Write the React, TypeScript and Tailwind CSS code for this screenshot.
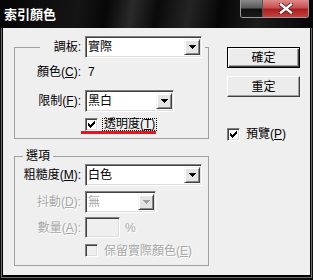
import clsx from 'clsx';

const sunken =
  'border border-t-[#808080] border-l-[#808080] border-r-white border-b-white shadow-[inset_1px_1px_0_#404040,inset_-1px_-1px_0_#dcdcdc]';

function CheckMark({ disabled }: { disabled?: boolean }) {
  const rows: [number, number, number][] = [
    [6, 0, 1],
    [5, 1, 2],
    [0, 2, 1],
    [4, 2, 3],
    [0, 3, 2],
    [3, 3, 3],
    [0, 4, 5],
    [1, 5, 3],
    [2, 6, 1],
  ];
  return (
    <svg width="7" height="7" viewBox="0 0 7 7" shapeRendering="crispEdges">
      {rows.map(([x, y, w], i) => (
        <rect key={i} x={x} y={y} width={w} height="1" fill={disabled ? '#a0a0a0' : '#000'} />
      ))}
    </svg>
  );
}

function Check({ checked, disabled }: { checked?: boolean; disabled?: boolean }) {
  return (
    <span
      className={clsx(
        'flex h-[13px] w-[13px] shrink-0 items-center justify-center',
        sunken,
        disabled ? 'bg-[#efefef]' : 'bg-white',
      )}
    >
      {checked && <CheckMark disabled={disabled} />}
    </span>
  );
}

function DropBtn({ disabled }: { disabled?: boolean }) {
  return (
    <span className="mr-[1px] flex h-[16px] w-[16px] items-center justify-center border border-t-[#f4f4f4] border-l-[#f4f4f4] border-r-[#404040] border-b-[#404040] bg-[#e4e4e4] shadow-[inset_1px_1px_0_#fff,inset_-1px_-1px_0_#8a8a8a]">
      <svg width="7" height="4" viewBox="0 0 7 4" shapeRendering="crispEdges">
        <path d="M0 0h7v1h-1v1h-1v1h-1v1h-1v-1h-1v-1h-1v-1h-1z" fill={disabled ? '#a0a0a0' : '#000'} />
      </svg>
    </span>
  );
}

function Combo({ w, value, disabled }: { w: string; value: string; disabled?: boolean }) {
  return (
    <div className={clsx('flex h-[22px] items-center justify-between bg-white', sunken, w)}>
      <span className={clsx('pl-[2px]', disabled && 'text-[#a8a8a8]')}>{value}</span>
      <DropBtn disabled={disabled} />
    </div>
  );
}

function Label({ children, disabled, w = 'w-[66px]' }: { children: React.ReactNode; disabled?: boolean; w?: string }) {
  return (
    <span
      className={clsx(
        'shrink-0 text-right whitespace-nowrap',
        w,
        disabled && 'text-[#a8a8a8] [text-shadow:1px_1px_0_#fff]',
      )}
    >
      {children}
    </span>
  );
}

function TitleBar() {
  return (
    <div className="flex h-[28px] shrink-0 items-start justify-between bg-[linear-gradient(100deg,#050505_0%,#151515_25%,#070707_34%,#2a2a2a_42%,#0a0a0a_50%,#242424_60%,#060606_70%,#1c1c1c_82%,#050505_100%)]">
      <span className="pl-[4px] pt-[7px] text-[13px] leading-[16px] font-bold text-white">索引顏色</span>
      <div className="mr-[4px] flex h-[18px] overflow-hidden rounded-b-[3px] border border-t-0 border-[#9a9a9a]">
        <span className="h-full w-[22px] border-r border-[#555] bg-[linear-gradient(#8a8a8a_0%,#5a5a5a_45%,#101010_55%,#1a1a1a_100%)]" />
        <span className="flex h-full w-[45px] items-center justify-center bg-[linear-gradient(#e08a8a_0%,#c85050_45%,#a82020_55%,#c84040_100%)]">
          <svg width="14" height="11" viewBox="0 0 14 11">
            <path d="M2 1.5L12 9.5M12 1.5L2 9.5" stroke="#5a1010" strokeWidth="4" strokeLinecap="square" />
            <path d="M2 1.5L12 9.5M12 1.5L2 9.5" stroke="#fff" strokeWidth="2.4" strokeLinecap="square" />
          </svg>
        </span>
      </div>
    </div>
  );
}

export default function App() {
  return (
    <div className="flex h-[280px] w-[313px] flex-col bg-[#0c0c0c] text-[12px] leading-[14px] text-black [font-family:'Liberation_Sans','Noto_Sans_CJK_TC',sans-serif]">
      <TitleBar />
      <div className="flex flex-1 flex-col px-[1px] pb-[2px]">
        <div className="flex flex-1 flex-col border border-t-0 border-[#707070]">
          <div className="flex flex-1 border-x border-b-[2px] border-black bg-[#efefef]">
            <div className="ml-[11px] flex w-[195px] flex-col pt-[8px]">
              <fieldset className="border border-[#a0a0a0] pb-[4px]">
                <legend className="ml-[25px] flex items-center pr-[3px]">
                  <Label w="w-[41px]">調板:</Label>
                  <div className="ml-[4px]">
                    <Combo w="w-[117px]" value="實際" />
                  </div>
                </legend>
                <div className="mt-[7px] flex">
                  <Label>
                    顏色(<u>C</u>):
                  </Label>
                  <span className="ml-[7px]">7</span>
                </div>
                <div className="mt-[11px] flex items-center">
                  <Label>
                    限制(<u>F</u>):
                  </Label>
                  <div className="ml-[4px]">
                    <Combo w="w-[89px]" value="黑白" />
                  </div>
                </div>
                <div className="ml-[70px] mt-[6px] flex h-[13px] items-center">
                  <Check checked />
                  <span className="ml-[4px] border border-dotted border-black px-[1px] leading-[11px]">
                    透明度(<u>T</u>)
                  </span>
                </div>
                <div className="ml-[66px] h-[3px] w-[75px] bg-[#e8141e]" />
              </fieldset>

              <fieldset className="mt-[10px] border border-[#a0a0a0] pb-[8px]">
                <legend className="ml-[8px] px-[3px]">選項</legend>
                <div className="mt-[1px] flex items-center">
                  <Label>
                    粗糙度(<u>M</u>):
                  </Label>
                  <div className="ml-[4px]">
                    <Combo w="w-[117px]" value="白色" />
                  </div>
                </div>
                <div className="mt-[5px] flex items-center">
                  <Label disabled>
                    抖動(<u>D</u>):
                  </Label>
                  <div className="ml-[4px]">
                    <Combo w="w-[71px]" value="無" disabled />
                  </div>
                </div>
                <div className="mt-[4px] flex items-center">
                  <Label disabled>
                    數量(<u>A</u>):
                  </Label>
                  <div className={clsx('ml-[4px] h-[21px] w-[35px] bg-[#efefef]', sunken)} />
                  <span className="ml-[5px] text-[#a8a8a8] [text-shadow:1px_1px_0_#fff]">%</span>
                </div>
                <div className="ml-[70px] mt-[6px] flex h-[13px] items-center">
                  <Check disabled />
                  <span className="ml-[6px] text-[#a8a8a8] [text-shadow:1px_1px_0_#fff]">
                    保留實際顏色(<u>E</u>)
                  </span>
                </div>
              </fieldset>
            </div>

            <div className="ml-[18px] flex w-[73px] flex-col pt-[19px]">
              <button className="h-[21px] border border-black bg-[#ececec] shadow-[inset_1px_1px_0_#fff,inset_-1px_-1px_0_#404040,inset_-2px_-2px_0_#a0a0a0]">
                確定
              </button>
              <button className="mt-[8px] h-[21px] border border-t-white border-l-white border-r-[#404040] border-b-[#404040] bg-[#ececec] shadow-[inset_-1px_-1px_0_#a0a0a0]">
                重定
              </button>
              <div className="mt-[30px] flex items-center">
                <Check checked />
                <span className="ml-[6px]">
                  預覽(<u>P</u>)
                </span>
              </div>
            </div>
          </div>
        </div>
      </div>
    </div>
  );
}
